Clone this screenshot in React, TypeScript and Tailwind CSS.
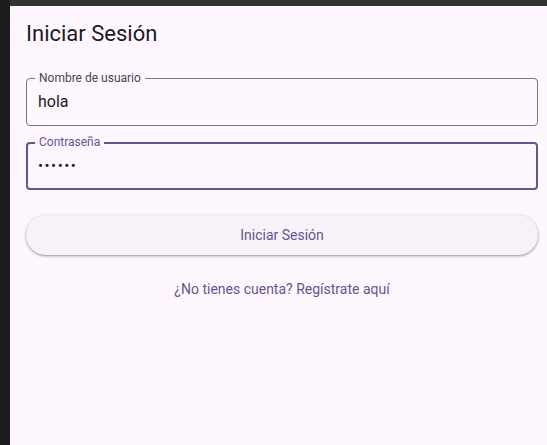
export default function App() {
  return (
    <div className="flex h-[445px] w-[547px] bg-[#1c1c1c] font-['Roboto',sans-serif]">
      <div className="w-[10px] shrink-0" />
      <div className="flex flex-1 flex-col">
        <div className="h-[6px] bg-[#333333]" />
        <div className="flex flex-1 flex-col bg-[#fef7ff] pl-4 pr-[9px] pt-[14px]">
          <h1 className="text-[22px] leading-[28px] text-[#1d1b20]">Iniciar Sesión</h1>

          <div className="relative mt-[30px] flex h-12 items-center rounded border border-[#79747e] px-[11px]">
            <span className="absolute -top-[9px] left-[8px] bg-[#fef7ff] px-1 text-xs leading-4 text-[#49454f]">
              Nombre de usuario
            </span>
            <span className="text-base text-[#1d1b20]">hola</span>
          </div>

          <div className="relative mt-4 flex h-12 items-center rounded border-2 border-[#65558f] px-[10px]">
            <span className="absolute -top-[10px] left-[7px] bg-[#fef7ff] px-1 text-xs leading-4 text-[#65558f]">
              Contraseña
            </span>
            <span className="text-[15px] tracking-[1.5px] text-[#1d1b20]">••••••</span>
          </div>

          <button className="mt-[25px] h-10 rounded-full bg-[#f7f2fa] text-sm text-[#65558f] shadow-[0_1px_2px_rgba(0,0,0,0.3),0_1px_3px_1px_rgba(0,0,0,0.1)]">
            Iniciar Sesión
          </button>

          <a className="mt-6 self-center text-sm text-[#65558f]">¿No tienes cuenta? Regístrate aquí</a>
        </div>
      </div>
    </div>
  );
}
